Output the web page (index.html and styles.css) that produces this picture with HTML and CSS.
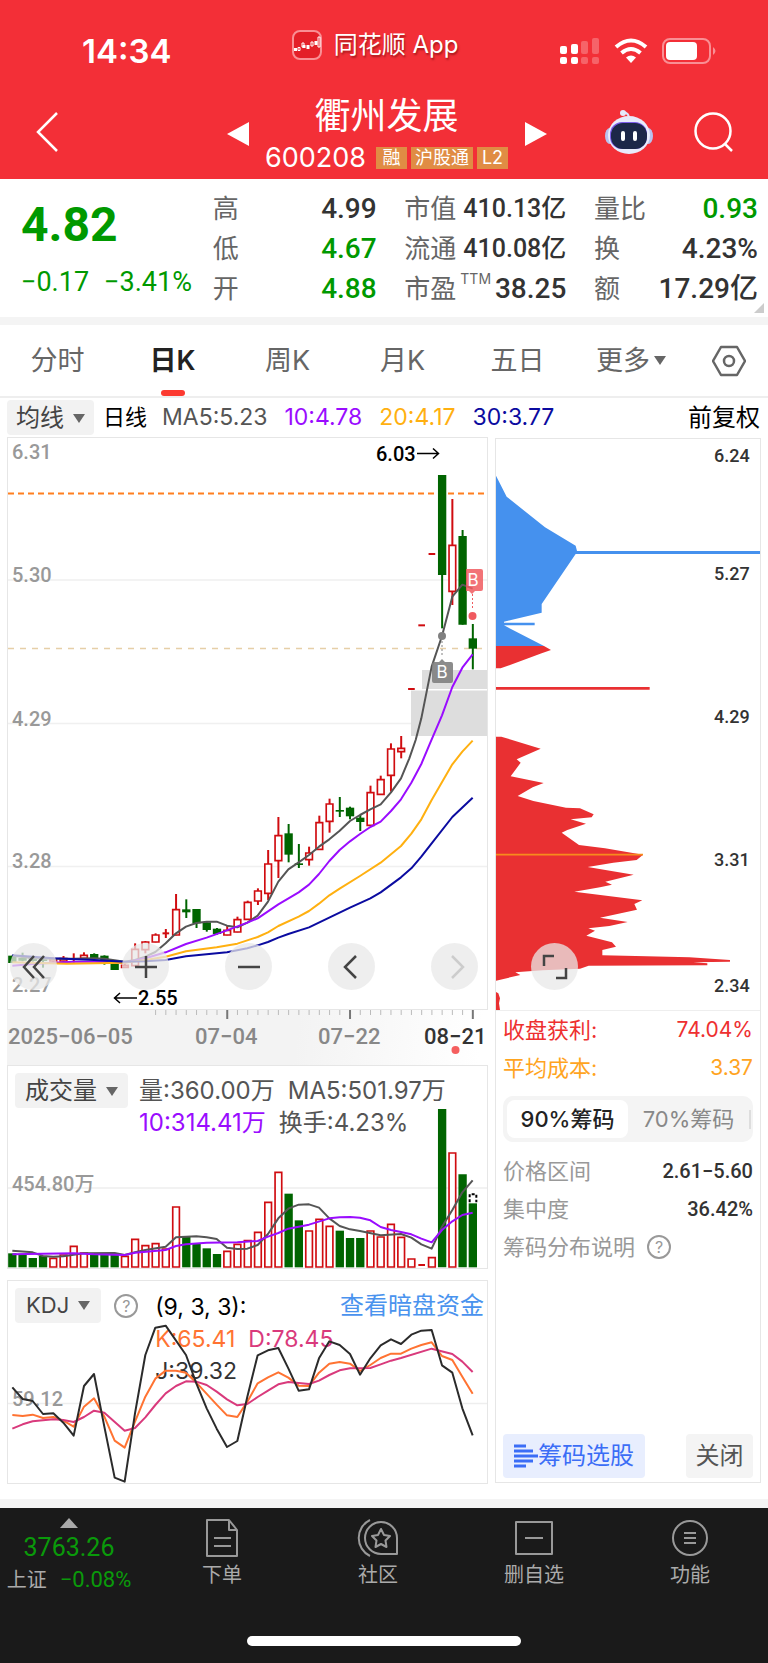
FILE: index.html
```html
<!DOCTYPE html>
<html lang="zh-CN">
<head>
<meta charset="utf-8">
<meta name="viewport" content="width=device-width, initial-scale=1">
<title>衢州发展 600208</title>
<link rel="stylesheet" href="styles.css">
</head>
<body>
<header class="header">
  <div class="status">
    <span class="status-time">14:34</span>
    <span class="status-app">
      <svg width="30" height="30" viewBox="0 0 30 30" aria-hidden="true"><rect x="1" y="1" width="28" height="28" rx="7" fill="#e41f28" stroke="#f98f94" stroke-width="2"/><path d="M2 19.500h3M12 15v3M16 15v4M24 11v4" stroke="#fff" stroke-width="3"/><path d="M6 17.500h2v3H6zM10 13h2v4h-2zM19 12h2v4h-2zM26 7h2v10h-2z" fill="none" stroke="#fff"/></svg>
      <span>同花顺 App</span>
    </span>
    <span class="status-icons">
      <svg width="40" height="28" viewBox="0 0 40 28" fill="#fff" aria-hidden="true"><rect x="0" y="9" width="7" height="8" rx="2"/><rect x="11" y="7" width="7" height="10" rx="2"/><rect x="0" y="20" width="7" height="7" rx="2"/><rect x="11" y="20" width="7" height="7" rx="2"/><g opacity=".25"><rect x="21" y="4" width="7" height="13" rx="2"/><rect x="32" y="1" width="7" height="16" rx="2"/><rect x="21" y="20" width="7" height="7" rx="2"/><rect x="32" y="20" width="7" height="7" rx="2"/></g></svg>
      <svg width="34" height="26" viewBox="0 0 34 26" fill="none" stroke="#fff" stroke-width="4" aria-hidden="true"><path d="M2 9Q17-4 32 9M7.500 15Q17 7 26.500 15"/><path d="M17 25l-5-5.500q5-4 10 0z" fill="#fff" stroke="none"/></svg>
      <svg width="54" height="26" viewBox="0 0 54 26" aria-hidden="true"><rect x="1" y="1" width="47" height="24" rx="7" fill="none" stroke="#f98f94" stroke-width="2"/><rect x="4" y="4" width="31" height="18" rx="4" fill="#fff"/><path d="M51 9q5 4 0 8z" fill="#f98f94"/></svg>
    </span>
  </div>
  <div class="nav">
    <button class="icon-btn" aria-label="返回"><svg width="24" height="42" viewBox="0 0 24 42" fill="none" stroke="#fff" stroke-width="2.500"><path d="M21 2L2 21l19 19"/></svg></button>
    <div class="stock">
      <button class="icon-btn" aria-label="上一只"><svg width="22" height="26" viewBox="0 0 22 26" fill="#fff"><path d="M22 1v24L0 13z"/></svg></button>
      <div class="stock-id">
        <h1 class="stock-name">衢州发展</h1>
        <div class="stock-code"><span class="code">600208</span><span class="tag">融</span><span class="tag">沪股通</span><span class="tag">L2</span></div>
      </div>
      <button class="icon-btn" aria-label="下一只"><svg width="22" height="26" viewBox="0 0 22 26" fill="#fff"><path d="M0 1v24l22-12z"/></svg></button>
    </div>
    <div class="nav-right">
      <button class="icon-btn" aria-label="智能助手"><svg width="48" height="46" viewBox="0 0 48 46"><path d="M24 9Q24 4 18 3" fill="none" stroke="#dfe4fb" stroke-width="2"/><circle cx="18" cy="4" r="3" fill="#e6eafc"/><ellipse cx="5" cy="27" rx="5" ry="8" fill="#b9c2ee"/><ellipse cx="43" cy="27" rx="5" ry="8" fill="#b9c2ee"/><ellipse cx="24" cy="26" rx="21" ry="19" fill="#e8ebfb"/><rect x="5" y="13" width="37" height="27" rx="12" fill="#7a5be8"/><rect x="6" y="14" width="36" height="26" rx="12" fill="#1c2748"/><path d="M18 24v6M30 24v6" stroke="#fff" stroke-width="4" stroke-linecap="round"/></svg></button>
      <button class="icon-btn" aria-label="搜索"><svg width="40" height="40" viewBox="0 0 40 40" fill="none" stroke="#fff" stroke-width="2.500"><circle cx="19" cy="19" r="17.500"/><path d="M31 32l7 7"/></svg></button>
    </div>
  </div>
</header>

<main>
<section class="quote">
  <div class="quote-main"><strong class="price">4.82</strong><div class="change"><span>−0.17</span><span>−3.41%</span></div></div>
  <dl class="facts">
    <div><dt>高</dt><dd>4.99</dd></div>
    <div><dt>低</dt><dd class="down">4.67</dd></div>
    <div><dt>开</dt><dd class="down">4.88</dd></div>
  </dl>
  <dl class="facts">
    <div><dt>市值</dt><dd class="long">410.13亿</dd></div>
    <div><dt>流通</dt><dd class="long">410.08亿</dd></div>
    <div><dt>市盈<sup>TTM</sup></dt><dd>38.25</dd></div>
  </dl>
  <dl class="facts">
    <div><dt>量比</dt><dd class="down">0.93</dd></div>
    <div><dt>换</dt><dd>4.23%</dd></div>
    <div><dt>额</dt><dd>17.29亿</dd></div>
  </dl>
</section>

<nav class="tabs">
  <button class="tab">分时</button><button class="tab active">日K</button><button class="tab">周K</button><button class="tab">月K</button><button class="tab">五日</button><button class="tab">更多<i class="caret small"></i></button>
  <button class="tab-set" aria-label="设置"><svg width="34" height="32" viewBox="0 0 34 32" fill="none" stroke="#666" stroke-width="2.500"><path d="M9 2h16l8 14-8 14H9L1 16z" stroke-linejoin="round"/><circle cx="17" cy="16" r="5"/></svg></button>
</nav>

<div class="ma-bar">
  <button class="pick">均线<i class="caret"></i></button>
  <span class="period">日线</span>
  <span class="ma c-gray">MA5:5.23</span><span class="ma c-purple">10:4.78</span><span class="ma c-amber">20:4.17</span><span class="ma c-navy">30:3.77</span>
  <button class="adjust">前复权</button>
</div>

<div class="charts">
  <div class="col">
    <div class="panel">
      <svg class="plot" viewBox="8 438 479 571" role="img" aria-label="日K线图">
        <path d="M8 580h479M8 723.500h479M8 866.500h479" stroke="#f0f0f0" stroke-width="1.500"/>
        <g fill="#ddd"><path d="M422 670h65v19h-65zM411 690.500h76v45.500h-76z"/></g>
        <path d="M8 493.500h479" stroke="#ff7f1f" stroke-width="2" stroke-dasharray="6 4"/>
        <path d="M8 648.500h479" stroke="#e6cfa8" stroke-width="1.500" stroke-dasharray="6 6"/>
        <g class="num axis"><text x="12" y="459">6.31</text><text x="12" y="582">5.30</text><text x="12" y="726">4.29</text><text x="12" y="868">3.28</text><text x="12" y="992">2.27</text></g>
        <g transform="translate(0 740) scale(.33333)">
          <g id="candles"></g>
          <g class="line">
            <polyline stroke="#555" points="37,647 98,655 160,656 221,656 282,655 313,656 374,665 405,660 436,650 466,636 497,610 528,580 558,560 589,549 620,545 650,545 681,557 712,562 742,548 773,527 804,485 835,425 865,388 896,367 927,345 957,320 988,298 1019,272 1050,243 1080,225 1111,208 1142,193 1173,157 1203,115 1228,55 1247,0 1264,-65 1295,-220 1326,-312 1357,-430 1387,-466 1418,-454"/>
            <polyline stroke="#9a0cff" points="37,677 98,672 160,668 221,665 282,665 374,668 436,655 497,637 558,612 620,593 681,571 742,548 773,535 835,493 896,457 927,434 957,402 988,363 1019,330 1050,304 1080,282 1111,261 1142,245 1173,213 1203,178 1234,128 1264,72 1290,10 1326,-74 1357,-159 1387,-217 1418,-257"/>
            <polyline stroke="#ffb010" points="37,667 200,671 374,668 436,660 497,650 558,634 650,622 712,611 773,591 804,577 835,558 896,530 927,513 957,491 988,466 1019,446 1080,408 1142,368 1203,318 1234,281 1264,238 1295,180 1357,73 1387,35 1418,2"/>
            <polyline stroke="#0b0ba0" points="37,646 160,655 282,660 374,665 436,664 497,660 558,649 681,637 742,625 773,616 804,606 835,593 865,582 927,562 1050,503 1111,475 1142,457 1203,412 1234,385 1264,350 1295,310 1357,231 1418,173"/>
          </g>
        </g>
        <g fill="#808080"><circle cx="442" cy="636" r="4"/><path d="M432 664q0-2 2-2h5l3-3 3 3h6q2 0 2 2v17q0 2-2 2h-17q-2 0-2-2z" opacity=".9"/></g>
        <path d="M442 641v14" stroke="#808080" stroke-dasharray="2 2"/>
        <g fill="#f05a5f"><circle cx="472.500" cy="616" r="4"/><path d="M466 569h15q2 0 2 2v18q0 2-2 2h-6l-3 3-3-3h-3z" opacity=".85"/></g>
        <path d="M472.500 594v16" stroke="#f05a5f" stroke-dasharray="2 2"/>
        <g class="mark"><text x="442" y="678">B</text><text x="473" y="586">B</text></g>
        <g class="num extreme"><text x="376" y="461">6.03</text><text x="138" y="1005">2.55</text></g>
        <path d="M417 453.500h21M433 448.500l5.500 5-5.500 5M137 998h-22M120 993l-5.500 5 5.500 5" fill="none" stroke="#000" stroke-width="1.500"/>
      </svg>
      <div class="controls">
        <button class="round" aria-label="最早"><svg width="24" height="24" viewBox="0 0 24 24"><path d="M12 1L2 12l10 11M22 1L12 12l10 11"/></svg></button>
        <button class="round" aria-label="放大"><svg width="24" height="24" viewBox="0 0 24 24"><path d="M12 1v22M1 12h22"/></svg></button>
        <button class="round" aria-label="缩小"><svg width="24" height="24" viewBox="0 0 24 24"><path d="M1 12h22"/></svg></button>
        <button class="round" aria-label="向前"><svg width="24" height="24" viewBox="0 0 24 24"><path d="M16 1L5 12l11 11"/></svg></button>
        <button class="round" aria-label="向后" disabled><svg width="24" height="24" viewBox="0 0 24 24"><path d="M9 1l11 11L9 23"/></svg></button>
      </div>
    </div>
    <svg class="dates" viewBox="7 1010 481 55" role="img" aria-label="日期轴">
      <g id="ticks" stroke="#bbb"></g>
      <g class="num date"><text x="8" y="1044">2025−06−05</text><text x="195" y="1044">07−04</text><text x="318" y="1044">07−22</text><text class="now" x="424" y="1044">08−21</text></g>
      <circle cx="455.500" cy="1050" r="4" fill="#f55f5f"/>
    </svg>
    <div class="panel">
      <svg class="plot" viewBox="8 1066 479 202" role="img" aria-label="成交量">
        <path d="M8 1188h479" stroke="#eee" stroke-width="1.500"/>
        <text class="num axis" x="12" y="1191">454.80万</text>
        <g transform="translate(0 1050) scale(.33333)">
          <g id="volume"></g>
          <path d="M1409 457v-24h20v24" fill="none" stroke="#000" stroke-width="6" stroke-dasharray="9 6"/>
          <g class="line">
            <polyline stroke="#555" points="37,602 98,607 129,618 160,620 190,619 252,610 344,609 374,615 405,607 436,600 497,590 528,562 589,559 620,562 650,567 681,593 712,597 742,596 773,585 804,552 835,505 865,476 896,464 927,463 957,473 988,505 1019,528 1050,538 1080,543 1142,556 1203,552 1234,563 1264,583 1295,596 1326,530 1357,480 1387,427 1418,391"/>
            <polyline stroke="#9a0cff" points="37,613 221,610 282,613 374,615 405,608 497,600 528,588 558,583 620,578 712,577 773,573 804,560 835,549 865,536 927,524 988,505 1019,502 1050,501 1080,503 1111,511 1142,531 1173,540 1203,546 1234,553 1264,566 1295,577 1326,540 1357,514 1387,495 1418,488"/>
          </g>
        </g>
      </svg>
      <div class="legend">
        <button class="pick">成交量<i class="caret"></i></button>
        <div class="readout"><div><span>量:360.00万</span><span>MA5:501.97万</span></div><div><span class="c-purple">10:314.41万</span><span>换手:4.23%</span></div></div>
      </div>
    </div>
    <div class="panel kdj">
      <svg class="plot" viewBox="8 1281 479 202" role="img" aria-label="KDJ指标">
        <path d="M8 1403.500h479" stroke="#eee" stroke-width="1.500"/>
        <text class="num axis" x="12" y="1406">59.12</text>
        <g class="line" transform="translate(0 1270) scale(.33333)">
          <polyline stroke="#ff7332" points="37,435 68,438 98,434 129,444 160,441 190,452 221,470 252,410 282,385 313,440 344,512 374,533 405,455 436,380 466,326 497,302 528,302 558,308 589,338 650,404 681,436 712,441 742,395 773,340 804,322 835,307 865,323 896,347 927,348 957,308 988,281 1019,276 1050,281 1080,303 1111,285 1142,264 1173,251 1203,251 1234,236 1264,225 1295,217 1326,258 1357,270 1387,320 1418,371"/>
          <polyline stroke="#d93a7c" points="37,476 68,463 98,454 160,448 190,450 221,456 252,441 282,422 313,428 374,482 405,474 436,442 466,405 497,370 528,348 558,334 589,335 620,345 650,365 681,388 712,406 742,402 773,381 804,362 835,343 865,336 927,342 957,332 988,315 1019,301 1050,295 1111,294 1142,283 1173,272 1203,264 1295,236 1357,252 1387,275 1418,306"/>
          <polyline stroke="#2b2b2b" points="37,352 68,387 98,393 129,432 160,430 190,458 221,497 252,348 282,312 313,470 344,623 374,635 405,430 436,255 466,173 497,167 558,255 589,340 620,415 650,476 681,531 712,513 742,380 773,256 804,241 835,234 865,295 896,362 927,358 957,265 988,214 1019,225 1050,252 1080,314 1111,265 1142,226 1173,208 1203,222 1234,194 1264,182 1295,180 1326,286 1357,308 1387,415 1418,496"/>
        </g>
      </svg>
      <div class="legend">
        <button class="pick">KDJ<i class="caret"></i></button>
        <button class="help" aria-label="KDJ说明">?</button>
        <div class="readout"><div class="c-black">(9, 3, 3):</div><div><span class="c-orange">K:65.41</span><span class="c-pink">D:78.45</span></div><div class="c-dark">J:39.32</div></div>
        <a class="dark-pool" href="#">查看暗盘资金</a>
      </div>
    </div>
  </div>

  <aside class="panel chips">
    <div class="chip-chart">
      <svg class="plot" viewBox="496 439 264 571" role="img" aria-label="筹码分布">
        <g transform="translate(480 700) scale(.33333)">
          <path fill="#4591ee" d="M48-673L80-610 195-518 287-463 291-447H840V-438H287L185-288V-262L72-235V-232H164V-224H72L192-162H48z"/>
          <path fill="#e93032" d="M48-162H192L213-150 185-140 62-95H48zM48-39H509V-31H48zM48 110H64L182 146 110 178 122 188 92 229 191 249 158 262 113 288 160 303 258 323 300 325 341 343 335 352 272 358 318 371 262 390 245 398 297 435 375 445 489 464 470 480 400 488 323 501 461 524 376 545 396 554 360 562 283 575 487 601 463 612 471 629 360 653 443 666 388 678 325 685 345 692 319 707 396 727 408 740 367 750V766L500 769 628 772 750 780V785L640 787 682 790V796L326 797 300 806 188 811 106 817 121 825 48 842zM48 876L55 880 60 895 57 910 60 930H48z"/>
          <path d="M48 464H489" stroke="#f78b1d" stroke-width="5"/>
        </g>
        <g class="num level"><text x="714" y="462">6.24</text><text x="714" y="580">5.27</text><text x="714" y="723">4.29</text><text x="714" y="866">3.31</text><text x="714" y="992">2.34</text></g>
      </svg>
      <button class="round expand" aria-label="展开"><svg width="26" height="26" viewBox="0 0 26 26"><path d="M2 12V2h10M24 14v10H14"/></svg></button>
    </div>
    <div class="chip-info">
      <div class="row c-red"><span>收盘获利:</span><span class="pct">74.04%</span></div>
      <div class="row c-gold"><span>平均成本:</span><span class="pct">3.37</span></div>
      <div class="segments"><button class="seg on">90%筹码</button><button class="seg">70%筹码</button></div>
      <div class="row muted"><span>价格区间</span><b class="num">2.61−5.60</b></div>
      <div class="row muted"><span>集中度</span><b class="num">36.42%</b></div>
      <div class="row muted explain"><span>筹码分布说明</span><button class="help" aria-label="筹码分布说明">?</button></div>
    </div>
    <div class="chip-actions">
      <button class="select"><svg width="24" height="24" viewBox="0 0 24 24" stroke="#3b6df6" stroke-width="3"><path d="M0 2h12M0 7h19M0 12h24M0 17h19M0 22h12"/></svg>筹码选股</button>
      <button class="close">关闭</button>
    </div>
  </aside>
</div>
</main>

<footer class="footer">
  <nav class="dock">
    <a class="index" href="#"><i class="up"></i><span class="index-value num">3763.26</span><span class="index-row">上证<b class="num">−0.08%</b></span></a>
    <a class="dock-item" href="#"><svg width="38" height="38" viewBox="0 0 38 38"><path d="M4 1h22l8 10v26H4zM26 1v10h8M11 19h17M11 27h17"/></svg>下单</a>
    <a class="dock-item" href="#"><svg width="42" height="38" viewBox="0 0 42 38"><path d="M24 3a16 16 0 0 0 0 32h16V19A16 16 0 0 0 24 3zM13 1a20 20 0 0 0 0 36M24 10l3 6 6 1-4.500 4.500 1 6.500-5.500-3-5.500 3 1-6.500L15 17l6-1z"/></svg>社区</a>
    <a class="dock-item" href="#"><svg width="38" height="38" viewBox="0 0 38 38"><path d="M1 3h36v32H1zM10 19h18"/></svg>删自选</a>
    <a class="dock-item" href="#"><svg width="38" height="38" viewBox="0 0 38 38"><circle cx="19" cy="19" r="17"/><path d="M13 14h12M13 19h12M13 24h12"/></svg>功能</a>
  </nav>
  <div class="home-bar"></div>
</footer>
<script src="charts.js"></script>
</body>
</html>
```
FILE: styles.css
```css
* { box-sizing: border-box; }
body { margin: 0; background: #fff; color: #333; font-family: Inter, "Noto Sans CJK SC", sans-serif; }
button { margin: 0; padding: 0; border: 0; background: none; color: inherit; font: inherit; }
a { color: inherit; text-decoration: none; }
svg { display: block; flex: none; }
h1, dl, dd { margin: 0; }
.num, .quote dd, .quote-main { font-family: Roboto, "Noto Sans CJK SC", sans-serif; }

.header { background: #f32f37; color: #fff; height: 179px; padding-top: 28px; }
.status { display: grid; grid-template-columns: 1fr auto 1fr; align-items: center; height: 46px; padding: 0 52px 0 82px; }
.status-time { font-size: 33px; font-weight: 600; line-height: 46px; }
.status-app { display: flex; align-items: center; gap: 12px; height: 34px; margin-bottom: 12px; padding-right: 48px; font-size: 24px; line-height: 34px; }
.status-app span { text-shadow: 1px 2px 2px rgba(90, 0, 0, .5); }
.status-icons { display: flex; align-items: center; justify-content: flex-end; gap: 14px; }
.nav { display: grid; grid-template-columns: 1fr auto 1fr; align-items: center; padding: 8px 34px 0 36px; }
.icon-btn { display: flex; }
.stock { display: flex; align-items: center; gap: 14px; height: 105px; padding-bottom: 2px; margin-bottom: -6px; padding-left: 3px; }
.stock-id { display: flex; flex-direction: column; align-items: center; min-width: 248px; }
.stock-name { font-size: 36px; font-weight: 400; line-height: 48px; }
.stock-code { display: flex; align-items: center; gap: 4px; height: 36px; }
.code { font-size: 27px; line-height: 36px; margin-right: 6px; }
.tag { background: #e08c44; font-size: 18px; line-height: 22px; padding: 0 4px; min-width: 31px; text-align: center; }
.nav-right { display: flex; justify-content: flex-end; align-items: center; gap: 41px; }

.quote { position: relative; display: grid; grid-template-columns: 164px 164px 162px 164px; justify-content: space-between; padding: 10px 10px 8px 21px; border-bottom: 8px solid #f4f4f4; height: 146px; }
.quote::after { content: ""; position: absolute; right: 4px; bottom: 4px; border: solid transparent; border-width: 10px 0 0 10px; border-bottom: 10px solid #ccc; border-top: 0; }
.quote-main { color: #090; white-space: nowrap; }
.price { display: block; font-size: 48px; line-height: 72px; font-weight: 700; }
.change { display: flex; gap: 15px; font-size: 27px; line-height: 42px; }
.facts > div { display: flex; justify-content: space-between; height: 40px; line-height: 40px; white-space: nowrap; }
.facts dt { color: #666; font-size: 26px; display: flex; }
.facts sup { font-size: 14px; line-height: 20px; margin-left: 4px; }
.facts dd { font-size: 28px; font-weight: 500; }
.facts .long { font-size: 25px; }
.facts .down { color: #090; }

.tabs { display: flex; height: 73px; border-bottom: 2px solid #eee; color: #666; }
.tab { position: relative; flex: 1; font-size: 27px; line-height: 71px; white-space: nowrap; }
.tab.active { color: #222; font-weight: 600; }
.tab.active::after { content: ""; position: absolute; left: calc(50% - 12px); bottom: 0; width: 24px; height: 6px; border-radius: 3px; background: #fc3a30; }
.tab-set { width: 78px; display: flex; align-items: center; justify-content: center; }
.caret { display: inline-block; border: 6px solid transparent; border-top: 9px solid #666; border-bottom: 0; margin-left: 9px; vertical-align: 3px; }
.caret.small { margin: 0 3px 0 4px; vertical-align: 5px; }

.ma-bar { display: flex; align-items: center; height: 39px; padding: 0 8px 0 7px; font-size: 24px; line-height: 35px; white-space: nowrap; }
.pick { background: #f2f2f2; border-radius: 4px; height: 35px; padding: 0 10px; color: #444; font-size: 24px; line-height: 35px; white-space: nowrap; }
.ma-bar .pick { padding: 0 9px; }
.period { margin: 0 15px 0 9px; font-size: 22px; color: #000; }
.ma { margin-right: 17px; font-size: 23px; }
.adjust { margin-left: auto; color: #000; }
.c-gray { color: #555; } .c-purple { color: #9a0cff; } .c-amber { color: #ffb010; } .c-navy { color: #0b0ba0; }
.c-black { color: #000; } .c-orange { color: #ff7332; } .c-pink { color: #d93a7c; } .c-dark { color: #333; }
.c-red { color: #ee3030; } .c-gold { color: #ffa41f; }

.charts { display: grid; grid-template-columns: 481fr 266fr; gap: 7px; padding: 0 7px 15px; border-bottom: 9px solid #f4f4f4; }
.panel { position: relative; display: grid; border: 1px solid #e6e6e6; }
.plot { width: 100%; height: auto; grid-area: 1 / 1; }
.dates { width: 100%; height: auto; background: linear-gradient(97deg, #f3f3f3 60%, #fff 98%); }
.axis { fill: #999; font-size: 20px; font-weight: 500; }
.date { fill: #888; font-size: 22px; font-weight: 500; }
.date .now { fill: #333; }
.extreme { fill: #000; font-size: 20px; font-weight: 500; }
.level { fill: #333; font-size: 18px; font-weight: 500; }
.mark { fill: #fff; font-size: 17px; text-anchor: middle; }
.line { fill: none; stroke-width: 6; stroke-linejoin: round; }
.controls { position: absolute; left: 2px; bottom: 19px; display: flex; gap: 56px; }
.round { display: flex; align-items: center; justify-content: center; width: 47px; height: 47px; border-radius: 50%; background: rgba(232, 232, 232, .75); }
.round svg { fill: none; stroke: #444; stroke-width: 2.5; }
.round:first-child:not(.expand) { margin-right: 9px; }
.round:disabled svg { stroke: #ccc; }
.legend { grid-area: 1 / 1; z-index: 1; display: flex; align-items: flex-start; padding: 7px 3px 0 7px; white-space: nowrap; }
.readout { margin-left: 11px; color: #555; font-size: 24px; line-height: 32px; padding-top: 2px; }
.readout span { margin-right: 13px; }
.kdj { margin-top: 11px; }
.kdj .plot { z-index: 2; pointer-events: none; }
.kdj .pick { font-size: 22px; padding: 0 11px; }
.kdj .help { margin: 6px 0 0 13px; }
.kdj .readout { margin-left: 17px; padding-top: 3px; font-size: 23px; width: 180px; margin-right: -180px; }
.help { width: 24px; height: 24px; border: 2px solid #999; border-radius: 50%; color: #999; font-size: 16px; line-height: 20px; }
.dark-pool { margin-left: auto; color: #4a93ee; font-size: 24px; line-height: 35px; z-index: 3; }

.chips { display: flex; flex-direction: column; margin-top: 1px; margin-bottom: 1px; }
.chip-chart { position: relative; border-bottom: 1px solid #eee; }
.expand { position: absolute; left: 13%; bottom: 20px; margin-left: 1px; }
.chip-info { padding: 0 7px; font-size: 22px; }
.row { display: flex; justify-content: space-between; align-items: center; height: 38px; line-height: 38px; white-space: nowrap; }
.pct { font-size: 21px; }
.muted { color: #999; font-size: 22px; }
.muted b { color: #333; font-size: 20px; font-weight: 500; }
.explain { justify-content: flex-start; gap: 12px; }
.segments { display: grid; grid-template-columns: 121px 1fr; background: #f4f4f4; border-radius: 10px; padding: 4px; height: 46px; margin: 9px 0 10px; color: #888; position: relative; }
.segments::after { content: ""; position: absolute; right: 2px; top: 14px; width: 2px; height: 19px; background: #ddd; }
.seg { line-height: 38px; border-radius: 8px; white-space: nowrap; }
.seg.on { background: #fff; color: #222; font-weight: 500; }
.chip-actions { display: flex; justify-content: space-between; margin-top: auto; padding: 0 7px 4px; font-size: 24px; line-height: 44px; }
.select { display: flex; align-items: center; background: #e8eefe; color: #3b6df6; border-radius: 4px; height: 44px; padding: 0 11px; white-space: nowrap; }
.close { background: #f4f4f4; color: #555; border-radius: 4px; width: 67px; height: 44px; white-space: nowrap; }

.footer { background: #1a1a1a; color: #aaa; height: 155px; display: flex; flex-direction: column; align-items: center; }
.dock { width: 100%; display: grid; grid-template-columns: 144px repeat(4, 1fr); height: 128px; font-size: 20px; }
.index { display: flex; flex-direction: column; align-items: center; padding-top: 10px; padding-right: 6px; }
.up { border: 9px solid transparent; border-bottom: 10px solid #aaa; border-top: 0; }
.index-value { color: #0a9a0a; font-size: 25px; line-height: 40px; }
.index-row { display: flex; gap: 13px; line-height: 24px; white-space: nowrap; }
.index-row b { color: #0a9a0a; font-size: 22px; font-weight: 400; }
.dock-item { display: flex; flex-direction: column; align-items: center; padding-top: 11px; line-height: 36px; }
.dock-item svg { fill: none; stroke: #999; stroke-width: 2; stroke-linejoin: round; }
.home-bar { width: 274px; height: 10px; border-radius: 5px; background: #fff; }
```
FILE: charts.js
```js
// Plot units are thirds of a pixel; one trading day every 30.7 units.
const STEP = 30.7, START = 37, RED = '#d00c10', GREEN = '#006400';
// [direction, high, low, body top, body bottom]
const days = [
  ['g',647,669,647,669],['g',638,664,654,662],['g',650,665,652,663],['g',655,683,658,663],['r',652,668,656,664],
  ['r',648,668,655,664],['r',640,668,657,661],['r',637,660,645,656],['g',640,656,642,656],['g',646,674,647,671],
  ['g',672,690,672,690],['r',665,683,675,683],['r',610,680,627,678],['r',603,640,605,630],['r',580,607,584,607],
  ['r',567,594,580,580],['r',462,586,508,586],['g',478,534,508,517],['g',507,564,507,550],['g',547,575,547,570],
  ['g',564,584,566,582],['r',557,586,570,586],['r',530,577,538,577],['r',482,539,486,539],['r',445,495,452,484],
  ['r',330,480,371,461],['r',231,414,286,363],['g',252,367,280,344],['g',312,384,370,372],['r',320,377,338,360],
  ['r',227,329,247,329],['r',176,278,191,245],['g',171,231,210,213],['g',200,238,203,229],['g',225,273,233,246],
  ['r',137,257,157,257],['r',107,164,118,164],['r',10,155,26,107],['r',-12,55,24,36],['r',-153,-153,-153,-153],
  ['r',-344,-344,-344,-344],['r',-558,-558,-558,-558],['g',-795,-335,-795,-495],['r',-723,-405,-585,-445],
  ['g',-630,-346,-612,-346],['g',-348,-212,-305,-274]
];
const volumes = [610,614,624,618,624,614,588,608,614,612,612,618,567,586,580,596,470,561,582,595,612,603,582,571,546,
  456,366,431,511,542,507,528,542,564,564,542,560,522,561,626,645,622,177,308,373,460];

const box = (x, top, bottom, red) => {
  if (!red) return `<path fill="${GREEN}" d="M${x - 12.5} ${top}h25v${Math.max(bottom - top, 5)}h-25z"/>`;
  if (bottom - top < 8) return `<path fill="${RED}" d="M${x - 10} ${top - 3}h20v6h-20z"/>`;
  return `<path fill="#fff" stroke="${RED}" stroke-width="5" d="M${x - 10} ${top + 1}h20V${bottom - 1}h-20z"/>`;
};
const xAt = i => START + i * STEP;

document.getElementById('candles').innerHTML = days.map(([dir, hi, lo, top, bottom], i) => {
  const red = dir === 'r', x = xAt(i);
  return `<path stroke="${red ? RED : GREEN}" stroke-width="6" d="M${x} ${hi}V${lo}"/>` + box(x, top, bottom, red);
}).join('');

document.getElementById('volume').innerHTML =
  volumes.map((top, i) => box(xAt(i), top, 652, days[i][0] === 'r')).join('');

let ticks = '';
for (let i = 14; i < 46; i++) {
  const major = [21, 33, 45].includes(i);
  ticks += `<path d="M${xAt(i) / 3} 1010v${major ? 9 : 5}"${major ? ' stroke="#777" stroke-width="2"' : ''}/>`;
}
document.getElementById('ticks').innerHTML = ticks;
```
